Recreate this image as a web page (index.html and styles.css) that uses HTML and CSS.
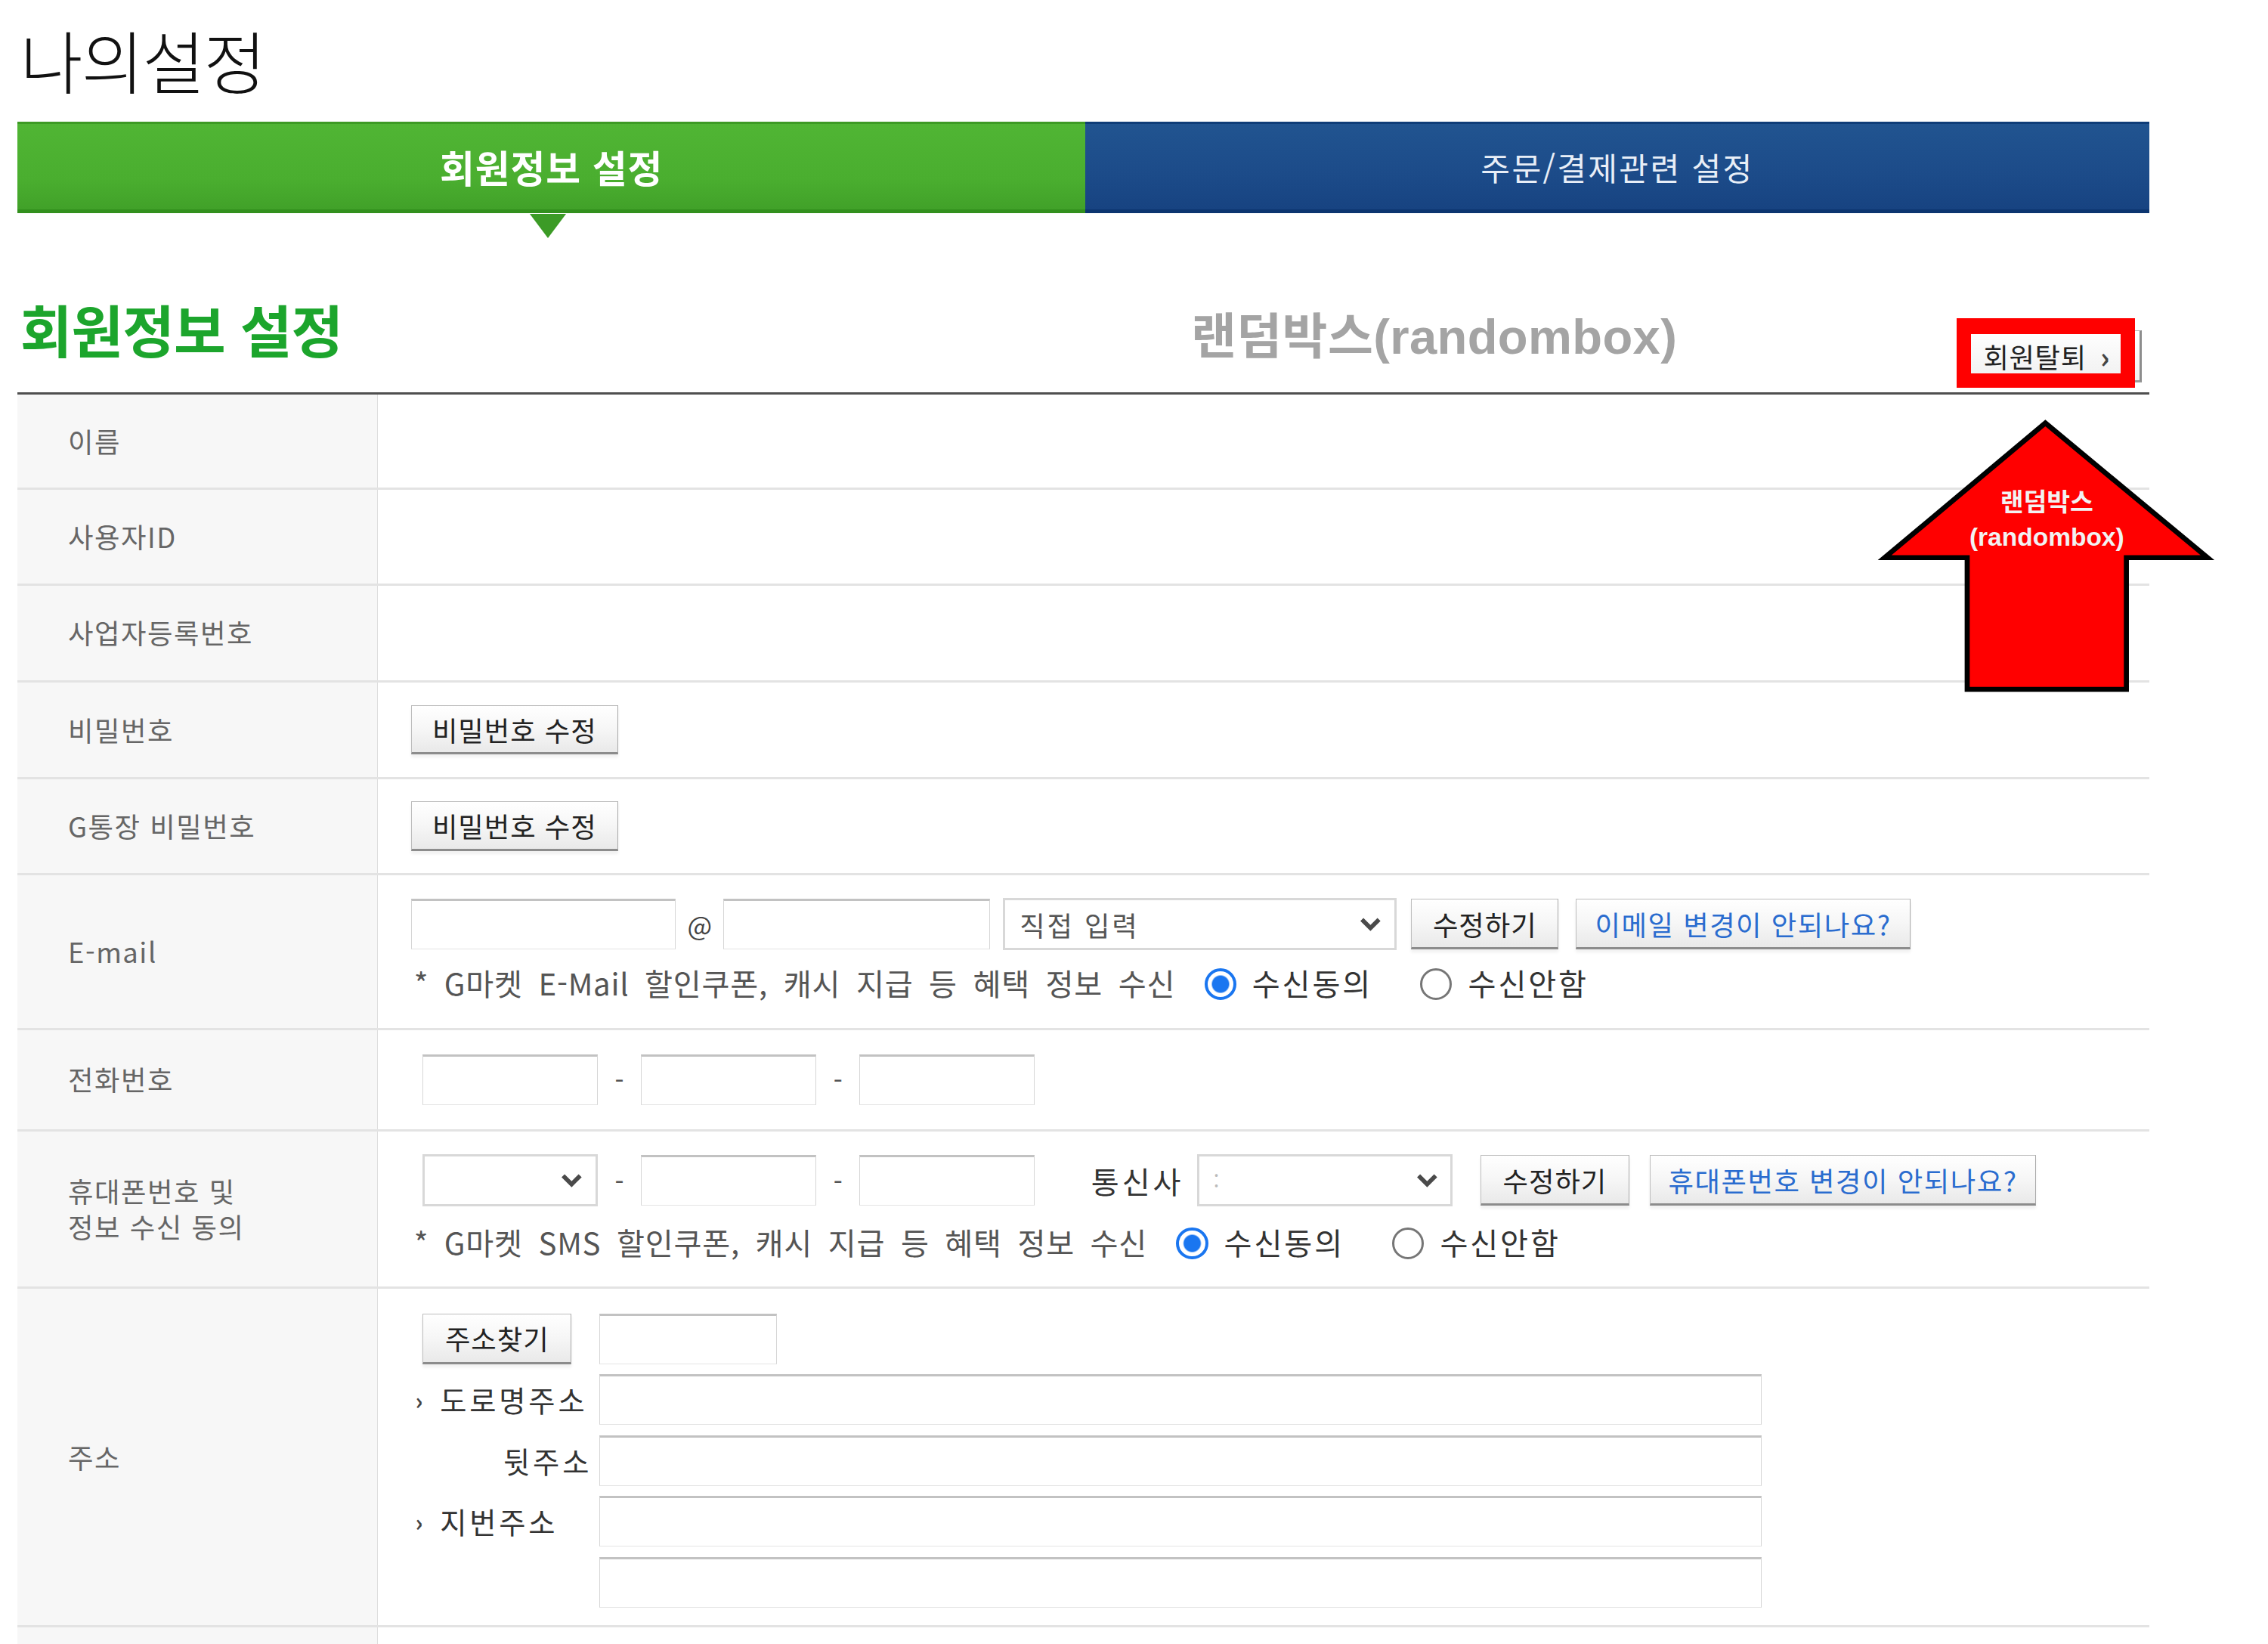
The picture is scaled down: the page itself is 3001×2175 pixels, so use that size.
FILE: index.html
```html
<!DOCTYPE html>
<html lang="ko">
<head>
<meta charset="utf-8">
<title>나의설정</title>
<link rel="stylesheet" href="styles.css">
</head>
<body>
<div class="page">
  <h1 class="title">나의설정</h1>

  <div class="tabs">
    <div class="tab tab-on">회원정보 설정</div>
    <div class="tab tab-off">주문/결제관련 설정</div>
  </div>

  <div class="sec-head">
    <h2 class="sec-title">회원정보 설정</h2>
    <span class="rb-label">랜덤박스(randombox)</span>
    <button class="btn-leave" type="button">회원탈퇴 <b>›</b></button>
  </div>

  <div class="form">
    <div class="row h66"><div class="lab">이름</div><div class="val"></div></div>
    <div class="row h66"><div class="lab">사용자ID</div><div class="val"></div></div>
    <div class="row h67"><div class="lab">사업자등록번호</div><div class="val"></div></div>
    <div class="row h67"><div class="lab">비밀번호</div><div class="val"><button class="btn btn-pw" type="button">비밀번호 수정</button></div></div>
    <div class="row h66"><div class="lab">G통장 비밀번호</div><div class="val"><button class="btn btn-pw" type="button">비밀번호 수정</button></div></div>

    <div class="row h107">
      <div class="lab">E-mail</div>
      <div class="val stack email">
        <div class="line">
          <input class="inp w183" type="text">
          <span class="at">@</span>
          <input class="inp w184" type="text">
          <div class="sel w272 ml9"><span class="sel-txt">직접 입력</span><svg class="chev" viewBox="0 0 14 9"><path d="M1.5 1.5 L7 7 L12.5 1.5"/></svg></div>
          <button class="btn w102 ml10" type="button">수정하기</button>
          <button class="btn btn-blue w231 ml12" type="button">이메일 변경이 안되나요?</button>
        </div>
        <div class="agree">
          <span class="agree-txt">* G마켓 E-Mail 할인쿠폰, 캐시 지급 등 혜택 정보 수신</span>
          <span class="radio on ml20"></span><span class="opt">수신동의</span>
          <span class="radio ml33"></span><span class="opt">수신안함</span>
        </div>
      </div>
    </div>

    <div class="row h70">
      <div class="lab">전화번호</div>
      <div class="val phone">
        <input class="inp w121" type="text">
        <span class="dash">-</span>
        <input class="inp w121" type="text">
        <span class="dash">-</span>
        <input class="inp w121" type="text">
      </div>
    </div>

    <div class="row h109">
      <div class="lab two">휴대폰번호 및<br>정보 수신 동의</div>
      <div class="val stack mobile">
        <div class="line">
          <div class="sel w121"><span class="sel-txt"></span><svg class="chev" viewBox="0 0 14 9"><path d="M1.5 1.5 L7 7 L12.5 1.5"/></svg></div>
          <span class="dash">-</span>
          <input class="inp w121" type="text">
          <span class="dash">-</span>
          <input class="inp w121" type="text">
          <span class="carrier">통신사</span>
          <div class="sel w177"><span class="sel-txt faint">:</span><svg class="chev" viewBox="0 0 14 9"><path d="M1.5 1.5 L7 7 L12.5 1.5"/></svg></div>
          <button class="btn w103 ml19" type="button">수정하기</button>
          <button class="btn btn-blue w267 ml14" type="button">휴대폰번호 변경이 안되나요?</button>
        </div>
        <div class="agree sms">
          <span class="agree-txt">* G마켓 SMS 할인쿠폰, 캐시 지급 등 혜택 정보 수신</span>
          <span class="radio on ml20"></span><span class="opt">수신동의</span>
          <span class="radio ml33"></span><span class="opt">수신안함</span>
        </div>
      </div>
    </div>

    <div class="row h234">
      <div class="lab">주소</div>
      <div class="val addr">
        <div class="addr-row">
          <div class="addr-lab"><button class="btn btn-zip" type="button">주소찾기</button></div>
          <input class="inp w123" type="text">
        </div>
        <div class="addr-row">
          <div class="addr-lab"><span class="mark">›</span>도로명주소</div>
          <input class="inp w803" type="text">
        </div>
        <div class="addr-row">
          <div class="addr-lab right">뒷주소</div>
          <input class="inp w803" type="text">
        </div>
        <div class="addr-row">
          <div class="addr-lab"><span class="mark">›</span>지번주소</div>
          <input class="inp w803" type="text">
        </div>
        <div class="addr-row">
          <div class="addr-lab"></div>
          <input class="inp w803" type="text">
        </div>
      </div>
    </div>

    <div class="row h80"><div class="lab"></div><div class="val"></div></div>
  </div>

  <div class="red-box"></div>

  <svg class="annot" viewBox="1300 288 230 192" aria-label="랜덤박스 (randombox)">
    <polygon points="1413,292 1525,385 1469,385 1469,476 1359,476 1359,385 1302,385" fill="#ff0000" stroke="#000" stroke-width="3.5" stroke-linejoin="miter"/>
    <text x="1414" y="353" class="annot-t">랜덤박스</text>
    <text x="1414" y="377" class="annot-t">(randombox)</text>
  </svg>
</div>
</body>
</html>
```
FILE: styles.css
```css
html { zoom: 1.915; }
body {
  margin: 0;
  background: #fff;
  font-family: "Noto Sans CJK KR", "Noto Sans", sans-serif;
  color: #333;
}
.page {
  position: relative;
  width: 1473px;
  padding-left: 12px;
}

/* title */
.title {
  margin: 0;
  height: 84px;
  box-sizing: border-box;
  padding: 11px 0 0 2px;
  font-size: 47px;
  line-height: 60px;
  font-weight: 300;
  letter-spacing: -1px;
  color: #111;
}

/* tabs */
.tabs { display: flex; height: 63px; }
.tab {
  display: flex;
  align-items: center;
  justify-content: center;
  box-sizing: border-box;
  color: #fff;
}
.tab-on {
  position: relative;
  width: 738px;
  background: linear-gradient(#50b534, #4aae2f 65%, #41a129);
  border-top: 2px solid #3d9a24;
  border-bottom: 3px solid #32901d;
  font-size: 26px;
  font-weight: 700;
  letter-spacing: 0.5px;
}
.tab-on::after {
  content: "";
  position: absolute;
  left: 354px;
  bottom: -20px;
  border-left: 13px solid transparent;
  border-right: 13px solid transparent;
  border-top: 17px solid #3c9b26;
}
.tab-off {
  width: 735px;
  background: linear-gradient(#215490, #1c4b89 60%, #174381);
  border-top: 2px solid #0f3d78;
  border-bottom: 3px solid #0c3570;
  font-size: 22px;
  letter-spacing: 1.2px;
  color: #e8eef7;
}

/* section head */
.sec-head {
  display: flex;
  align-items: flex-start;
  height: 124px;
}
.sec-title {
  flex: 0 0 809px;
  margin: 56px 0 0 2px;
  font-size: 39px;
  line-height: 48px;
  font-weight: 700;
  letter-spacing: -0.5px;
  color: #1ca52c;
}
.rb-label {
  margin-top: 64px;
  font-family: "Liberation Sans", "Noto Sans CJK KR", sans-serif;
  font-size: 34px;
  line-height: 44px;
  font-weight: 700;
  color: #a4a4a4;
  letter-spacing: 0.2px;
}
.btn-leave {
  margin: 81px 5px 0 auto;
  width: 124px;
  height: 36px;
  box-sizing: border-box;
  padding: 0 0 0 14px;
  text-align: left;
  background: linear-gradient(#fff, #f0f0f0);
  border: 1px solid #b4b4b4;
  border-right: 2px solid #8d8d8d;
  border-bottom: 2px solid #9a9a9a;
  font-family: inherit;
  font-size: 19px;
  color: #222;
  letter-spacing: 0.3px;
}
.btn-leave b { font-size: 20px; margin-left: 4px; color: #444; }

.red-box {
  position: absolute;
  left: 1352px;
  top: 220px;
  width: 123px;
  height: 48px;
  box-sizing: border-box;
  border: 10px solid #ff0000;
  border-top-width: 11px;
}

/* form table */
.form { border-top: 2px solid #4f4f4f; }
.row {
  display: flex;
  box-sizing: border-box;
  border-bottom: 2px solid #e3e3e3;
}
.h66 { height: 66px; }
.h67 { height: 67px; }
.h70 { height: 70px; }
.h80 { height: 80px; border-bottom: none; }
.h107 { height: 107px; }
.h109 { height: 109px; }
.h234 { height: 234px; }

.lab {
  flex: 0 0 249px;
  box-sizing: border-box;
  display: flex;
  align-items: center;
  padding-left: 35px;
  background: #f7f7f7;
  border-right: 1px solid #dedede;
  font-size: 19px;
  line-height: 25px;
  color: #666;
  letter-spacing: 0.8px;
}
.val {
  flex: 1;
  display: flex;
  align-items: center;
  padding-left: 23px;
}
.val.stack {
  flex-direction: column;
  align-items: flex-start;
  justify-content: flex-start;
  padding-top: 16px;
}
.line { display: flex; align-items: center; height: 36px; }

/* controls */
.inp {
  box-sizing: border-box;
  height: 35px;
  margin: 0;
  padding: 0 6px;
  background: #fff;
  border: 1px solid #d6d6d6;
  border-top: 2px solid #c2c2c2;
  border-bottom-color: #e4e4e4;
  font-family: inherit;
  font-size: 18px;
  outline: none;
}

.btn {
  box-sizing: border-box;
  height: 35px;
  padding: 0;
  background: linear-gradient(#ffffff, #f6f6f6 50%, #e9e9e9);
  border: 1px solid #bdbdbd;
  border-bottom: 2px solid #8c8c8c;
  border-right-color: #a9a9a9;
  box-shadow: 0 2px 2px rgba(0,0,0,0.06);
  font-family: inherit;
  font-size: 19px;
  color: #222;
  letter-spacing: 0.5px;
}
.btn-pw { width: 143px; height: 34px; }
.btn-blue { color: #2a6ccf; letter-spacing: 0.8px; }
.btn-zip { width: 103px; margin-left: 5px; }

.w121 { width: 121px; }
.w123 { width: 123px; }
.w183 { width: 183px; }
.w184 { width: 184px; }
.w272 { width: 272px; }
.w177 { width: 177px; }
.w102 { width: 102px; }
.w103 { width: 103px; }
.w231 { width: 231px; }
.w267 { width: 267px; }
.w803 { width: 803px; }
.ml9 { margin-left: 9px; }
.ml10 { margin-left: 10px; }
.ml12 { margin-left: 12px; }
.ml14 { margin-left: 14px; }
.ml19 { margin-left: 19px; }
.ml20 { margin-left: 20px; }
.ml33 { margin-left: 33px; }

.at {
  width: 33px;
  text-align: center;
  font-size: 18px;
  color: #444;
}
.dash {
  width: 30px;
  text-align: center;
  font-size: 18px;
  color: #555;
}

.sel {
  box-sizing: border-box;
  height: 36px;
  display: flex;
  align-items: center;
  justify-content: space-between;
  padding: 0 9px 0 10px;
  background: #fff;
  border: 2px solid #d8d8d8;
}
.sel-txt { font-size: 19px; color: #555; letter-spacing: 1.5px; }
.sel-txt.faint { color: #bbb; font-size: 14px; }
.chev {
  width: 15px;
  height: 10px;
  fill: none;
  stroke: #4a4a4a;
  stroke-width: 2.8;
}

/* agree line */
.agree {
  display: flex;
  align-items: center;
  height: 26px;
  margin-top: 9px;
  padding-left: 2px;
  font-size: 21px;
  color: #555;
}
.agree.sms { margin-top: 11px; }
.agree-txt { word-spacing: 4.5px; letter-spacing: 0.4px; }
.opt { margin-left: 11px; color: #333; letter-spacing: 1.5px; }
.radio {
  box-sizing: border-box;
  width: 22px;
  height: 22px;
  border-radius: 50%;
  border: 2px solid #767676;
  background: #fff;
  margin-top: 3px;
}
.radio.on {
  border: 2.5px solid #1a76f0;
  background: radial-gradient(circle, #1a76f0 0 5.5px, #fff 6.5px);
}

/* phone rows */
.val.phone { padding-left: 31px; }
.val.mobile { padding-left: 31px; }
.val.mobile .agree { margin-left: -8px; }
.carrier {
  margin-left: 39px;
  margin-right: 9px;
  font-size: 21px;
  color: #333;
  letter-spacing: 2px;
}

/* address */
.val.addr {
  flex-direction: column;
  align-items: flex-start;
  justify-content: flex-start;
  padding-top: 17px;
  padding-left: 26px;
  gap: 7px;
}
.addr-row { display: flex; align-items: center; height: 35px; }
.addr-lab {
  box-sizing: border-box;
  width: 127px;
  display: flex;
  align-items: center;
  font-size: 20px;
  color: #333;
  letter-spacing: 2px;
}
.addr-lab.right { justify-content: flex-end; padding-right: 5px; }
.mark {
  width: 17px;
  font-size: 16px;
  font-weight: 700;
  color: #444;
}

/* annotation arrow */
.annot {
  position: absolute;
  left: 1300px;
  top: 288px;
  width: 230px;
  height: 192px;
  overflow: visible;
}
.annot-t {
  font-family: "Liberation Sans", "Noto Sans CJK KR", sans-serif;
  font-size: 17.5px;
  font-weight: 700;
  fill: #f2f2f2;
  text-anchor: middle;
}
```
